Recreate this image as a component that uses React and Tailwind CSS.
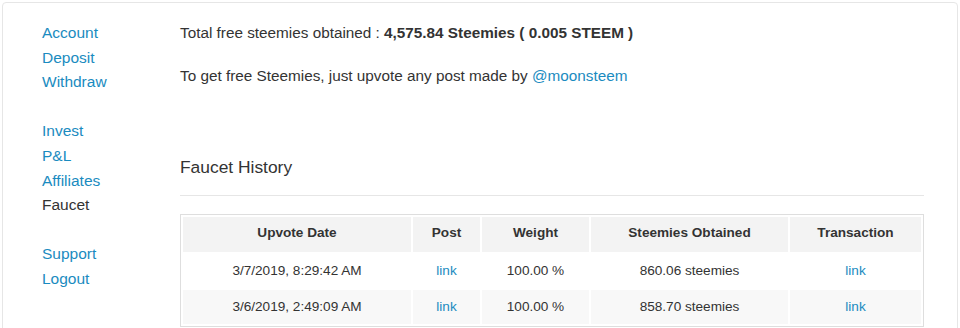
const navGroups = [
  ['Account', 'Deposit', 'Withdraw'],
  ['Invest', 'P&L', 'Affiliates', 'Faucet'],
  ['Support', 'Logout'],
]

const rows = [
  { date: '3/7/2019, 8:29:42 AM', weight: '100.00 %', amount: '860.06 steemies' },
  { date: '3/6/2019, 2:49:09 AM', weight: '100.00 %', amount: '858.70 steemies' },
]

const Sidebar = () => (
  <div className="w-[177px] shrink-0 pl-[39px] pt-[18px] text-[15.5px] leading-[24.6px]">
    {navGroups.map((group, i) => (
      <ul key={i} className="mb-[24.6px]">
        {group.map(item => (
          <li key={item}>
            {item === 'Faucet' ? (
              <span className="text-[#333]">{item}</span>
            ) : (
              <a href="#" className="text-[#1a8bc0]">
                {item}
              </a>
            )}
          </li>
        ))}
      </ul>
    ))}
  </div>
)

const App = () => {
  return (
    <div className="h-[328px] overflow-hidden bg-white p-[2px] font-['Liberation_Sans',Arial,sans-serif] text-[#333]">
      <div className="flex h-[340px] rounded-[4px] border border-[#e6e6e6]">
        <Sidebar />
        <div className="flex-1 pr-[33px] pt-[18px]">
          <p className="text-[15.3px] leading-[24px]">
            Total free steemies obtained : <b>4,575.84 Steemies ( 0.005 STEEM )</b>
          </p>
          <p className="mt-[19px] text-[15.3px] leading-[24px]">
            To get free Steemies, just upvote any post made by{' '}
            <a href="#" className="text-[#1a8bc0]">
              @moonsteem
            </a>
          </p>
          <h3 className="mt-[67px] text-[17.4px] leading-[24px]">Faucet History</h3>
          <hr className="mt-[16px] border-t border-[#e6e6e6]" />
          <table className="mt-[18px] w-full border-separate border-spacing-[2px] border border-[#dedede] text-center text-[13.6px]">
            <thead>
              <tr className="bg-[#f3f3f3]">
                <th className="h-[35px] w-[228px] pb-[2px] font-bold">Upvote Date</th>
                <th className="w-[67px] pb-[2px] font-bold">Post</th>
                <th className="w-[107px] pb-[2px] font-bold">Weight</th>
                <th className="w-[197px] pb-[2px] font-bold">Steemies Obtained</th>
                <th className="pb-[2px] font-bold">Transaction</th>
              </tr>
            </thead>
            <tbody>
              {rows.map((row, i) => (
                <tr key={row.date} className={i % 2 ? 'bg-[#f8f8f8]' : 'bg-white'}>
                  <td className="h-[34px]">{row.date}</td>
                  <td>
                    <a href="#" className="text-[#1a8bc0]">link</a>
                  </td>
                  <td>{row.weight}</td>
                  <td>{row.amount}</td>
                  <td>
                    <a href="#" className="text-[#1a8bc0]">link</a>
                  </td>
                </tr>
              ))}
            </tbody>
          </table>
        </div>
      </div>
    </div>
  )
}

export default App
